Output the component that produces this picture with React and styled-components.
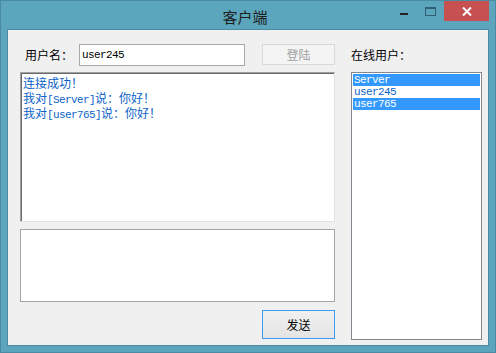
import React from 'react'
import styled, { createGlobalStyle } from 'styled-components'

const GlobalStyle = createGlobalStyle`
    html, body {
        margin: 0;
        padding: 0;
        background: #5ba5bd;
    }
    * {
        box-sizing: border-box;
    }
`

const cjk = `"Noto Sans CJK SC", "Noto Sans", sans-serif`
const mono = `"Liberation Mono", "DejaVu Sans Mono", "Noto Sans CJK SC", monospace`

const Window = styled.div`
    width: 496px;
    height: 353px;
    background: #5ba5bd;
    border: 1px solid #4a8ba3;
    display: flex;
    flex-direction: column;
    font-family: ${cjk};
`

const TitleBar = styled.div`
    height: 28px;
    display: grid;
    grid-template-columns: 1fr auto 1fr;
    padding-right: 6px;
`

const Title = styled.div`
    grid-column: 2;
    font-size: 15px;
    line-height: 28px;
    padding-top: 2px;
    color: #1e1e1e;
`

const Controls = styled.div`
    grid-column: 3;
    justify-self: end;
    display: flex;
    align-items: flex-start;
`

const ControlButton = styled.div`
    width: ${({w}) => w}px;
    height: 20px;
    display: flex;
    align-items: ${({low}) => low ? 'flex-end' : 'center'};
    justify-content: center;
    padding-bottom: ${({low}) => low ? '6px' : '0'};
    background: ${({close}) => close ? '#c75050' : 'transparent'};
`

const MinBar = styled.div`
    width: 8px;
    height: 2px;
    background: #222;
`

const Client = styled.div`
    margin: 0 6px 6px;
    height: 317px;
    border: 1px solid #4a8ba2;
    background: #f0f0f0;
    display: flex;
    gap: 16px;
    padding: 14px 6px 5px 12px;
`

const LeftColumn = styled.div`
    width: 315px;
    display: flex;
    flex-direction: column;
`

const RightColumn = styled.div`
    width: 131px;
    display: flex;
    flex-direction: column;
`

const TopRow = styled.div`
    display: flex;
    align-items: flex-start;
    height: 22px;
`

const Label = styled.div`
    font-size: 12px;
    line-height: 22px;
    color: #000;
    margin-left: ${({indent}) => indent || 0}px;
    width: ${({w}) => w ? `${w}px` : 'auto'};
`

const NameInput = styled.div`
    width: 166px;
    height: 22px;
    background: #fff;
    border: 1px solid #a9a9a9;
    font-family: ${mono};
    font-size: 11px;
    letter-spacing: -0.6px;
    line-height: 20px;
    padding-left: 2px;
    color: #000;
`

const Button = styled.div`
    margin-left: auto;
    width: 73px;
    height: ${({h}) => h}px;
    display: flex;
    align-items: center;
    justify-content: center;
    font-size: 12px;
    color: ${({disabled}) => disabled ? '#a3a3a3' : '#000'};
    background: ${({disabled}) => disabled ? '#f4f4f4' : 'linear-gradient(#f0f0f0, #e4e4e4)'};
    border: 1px solid ${({disabled, focused}) => disabled ? '#d9d9d9' : focused ? '#3c9cf4' : '#acacac'};
`

const ChatLog = styled.div`
    margin-top: 6px;
    height: 150px;
    background: #fff;
    border-top: 1px solid #a0a0a0;
    border-left: 1px solid #a0a0a0;
    border-right: 1px solid #e3e3e3;
    border-bottom: 1px solid #e3e3e3;
    box-shadow: inset 1px 1px 0 #696969;
    padding: 2px 2px 0 2px;
    color: #0b63c9;
    font-size: 12px;
`

const Line = styled.div`
    white-space: pre;
    height: 15px;
    line-height: 15px;
`

const Mono = styled.span`
    font-family: ${mono};
    font-size: 11px;
    line-height: 1;
    letter-spacing: -0.6px;
`

const MessageBox = styled.div`
    margin-top: 7px;
    height: 73px;
    background: #fff;
    border: 1px solid #a5a5a5;
`

const SendRow = styled.div`
    margin-top: 8px;
    display: flex;
`

const UserList = styled.div`
    margin-top: 6px;
    height: 268px;
    background: #fff;
    border: 1px solid #828790;
    padding: 1px;
`

const UserItem = styled.div`
    height: 12px;
    line-height: 12px;
    padding-left: 1px;
    font-family: ${mono};
    font-size: 11px;
    letter-spacing: -0.6px;
    background: ${({selected}) => selected ? '#3399ff' : 'transparent'};
    color: ${({selected}) => selected ? '#fff' : '#0b63c9'};
`

const users = [
    { name: 'Server', selected: true },
    { name: 'user245', selected: false },
    { name: 'user765', selected: true },
]

export default function App() {
    return (
        <>
            <GlobalStyle />
            <Window>
                <TitleBar>
                    <Title>客户端</Title>
                    <Controls>
                        <ControlButton w={26} low>
                            <MinBar />
                        </ControlButton>
                        <ControlButton w={27}>
                            <svg width="11" height="9" viewBox="0 0 11 9">
                                <rect x="0.5" y="0.5" width="10" height="8" fill="none" stroke="#2e5f72" />
                                <rect x="0" y="0" width="11" height="2" fill="#2e5f72" />
                            </svg>
                        </ControlButton>
                        <ControlButton w={45} close>
                            <svg width="10" height="9" viewBox="0 0 10 9">
                                <path d="M1 0.5 L9 8.5 M9 0.5 L1 8.5" stroke="#fff" strokeWidth="2" />
                            </svg>
                        </ControlButton>
                    </Controls>
                </TitleBar>
                <Client>
                    <LeftColumn>
                        <TopRow>
                            <Label indent={5} w={54}>用户名：</Label>
                            <NameInput>user245</NameInput>
                            <Button h={21} disabled>登陆</Button>
                        </TopRow>
                        <ChatLog>
                            <Line>连接成功！</Line>
                            <Line>我对<Mono>[Server]</Mono>说：你好！</Line>
                            <Line>我对<Mono>[user765]</Mono>说：你好！</Line>
                        </ChatLog>
                        <MessageBox />
                        <SendRow>
                            <Button h={29} focused>发送</Button>
                        </SendRow>
                    </LeftColumn>
                    <RightColumn>
                        <Label>在线用户：</Label>
                        <UserList>
                            {users.map(u => (
                                <UserItem key={u.name} selected={u.selected}>{u.name}</UserItem>
                            ))}
                        </UserList>
                    </RightColumn>
                </Client>
            </Window>
        </>
    )
}
